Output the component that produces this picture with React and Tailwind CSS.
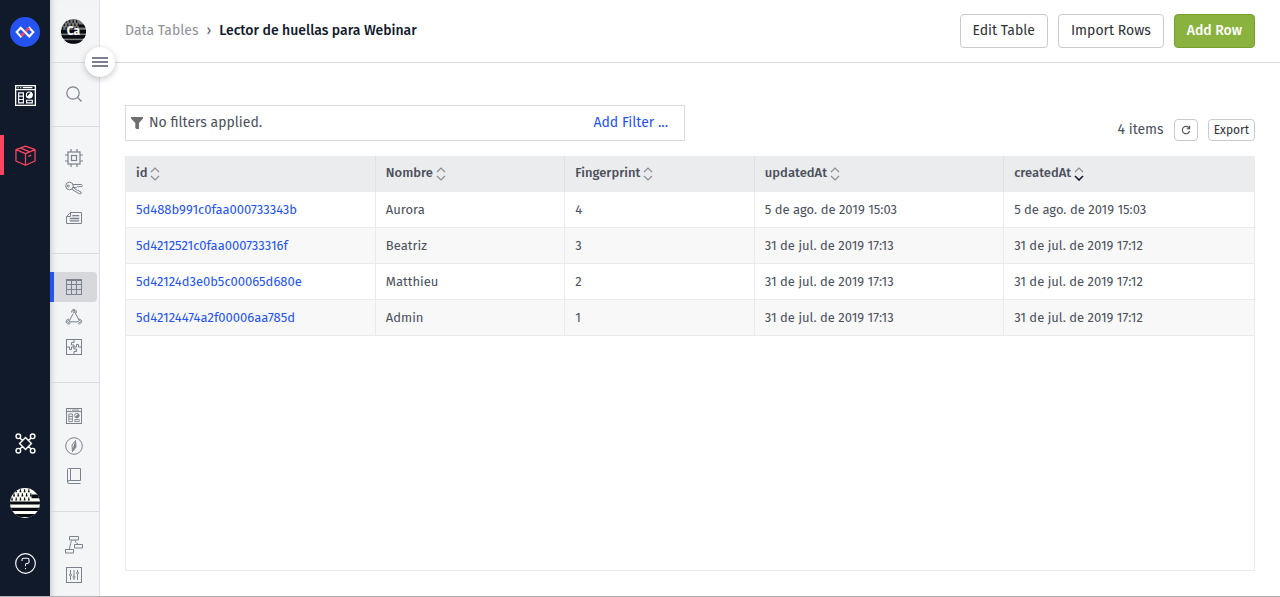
import React, { useId } from "react";

function Icon({ size = 16, box = 16, children, className = "" }) {
  return (
    <svg
      width={size}
      height={size}
      viewBox={`0 0 ${box} ${box}`}
      fill="none"
      stroke="currentColor"
      strokeWidth="1"
      className={`block shrink-0 ${className}`}
      aria-hidden="true"
    >
      {children}
    </svg>
  );
}

const LogoIcon = () => (
  <svg width="30" height="30" viewBox="0 0 30 30" fill="none" className="block" aria-hidden="true">
    <circle cx="15" cy="15" r="15" fill="#2453f0" />
    <g strokeWidth="2.1" strokeLinejoin="miter">
      <path d="M11.600 18.600 10.700 19.500 6.700 15l4-4.200 8.600 8.700 4-4.500-4-4.200-.9.900" stroke="#fff" />
      <path d="m11.200 19 2.900-3.100M15.900 14.100l3.200-3.200" stroke="#ff4558" strokeWidth="2.6" />
    </g>
  </svg>
);

function Flag({ size, dark = false }) {
  const id = useId();
  const spots = [];
  for (let r = 0; r < 3; r++)
    for (let c = 0; c < 5; c++) spots.push([2 + c * 4.2 + (r % 2) * 2, 1.2 + r * 4.1]);
  const light = dark ? "#777" : "#fbfcf6";
  return (
    <svg width={size} height={size} viewBox="0 0 30 30" className="block" aria-hidden="true">
      <clipPath id={id}>
        <circle cx="15" cy="15" r="15" />
      </clipPath>
      <g clipPath={`url(#${id})`}>
        <rect width="30" height="30" fill={light} />
        <path d="M21.500 6.500h9v3.800h-9zM0 13.500h30v3H0zM0 19.800h30v3.200H0zM0 26h30v3H0z" fill="#080b10" />
        {spots.map(([x, y], i) => (
          <path key={i} d={`M${x} ${y}v2.600m-.9 0h1.800`} stroke="#080b10" strokeWidth="1.1" />
        ))}
        {dark && <path d="M0 13h30v4.500H0zM0 19.500h30v4H0zM0 25.500h30v4H0z" fill="#080b10" />}
      </g>
    </svg>
  );
}

const DashboardIcon = ({ size }) => (
  <Icon size={size} box={20}>
    <rect x=".6" y=".6" width="18.800" height="18.800" strokeWidth="1.3" />
    <path d="M.6 4.500h18.800M2.500 2.600h1M5 2.600h1M7.500 2.600h9" strokeWidth="1.2" />
    <path d="M3.500 7.500h4.500v9.500H3.500zM3.500 10.600H8M3.500 13.800H8M11 14.500h5.500v2.500H11z" strokeWidth="1.1" />
    <circle cx="13.600" cy="9.500" r="2.800" strokeWidth="1.1" />
    <path d="m13.600 9.500 2-2a2.800 2.800 0 0 1-3.800 4z" fill="currentColor" />
  </Icon>
);

const BoxIcon = () => (
  <Icon size={21} box={22}>
    <path
      d="M11 1.200 21 4.800v11.900L11 21.200 1 16.700V4.800zM1 4.800 11 9l10-4.200M11 9v12.200M6 3.300 15.500 7.200M13.800 12l3.200-1.400"
      strokeWidth="1.3"
      strokeLinejoin="round"
    />
  </Icon>
);

const NodesIcon = () => (
  <Icon size={21} box={22}>
    <g strokeWidth="1.5">
      <path d="M11 4.800 17.200 11 11 17.200 4.800 11zM5.200 5.200 8 8M16.800 5.200 14 8M5.200 16.800 8 14M16.800 16.800 14 14" />
      <circle cx="3.500" cy="3.500" r="2.400" />
      <circle cx="18.500" cy="3.500" r="2.400" />
      <circle cx="3.500" cy="18.500" r="2.400" />
      <circle cx="18.500" cy="18.500" r="2.400" />
    </g>
  </Icon>
);

const HelpIcon = () => (
  <Icon size={21} box={22}>
    <circle cx="11" cy="11" r="10.300" strokeWidth="1.2" />
    <path d="M7.300 8.300V7.200q0-1.700 1.700-1.700h4q1.700 0 1.700 1.700v2q0 1.700-1.700 1.700h-.7q-1.300 0-1.300 1.300v1.600M11 15.700v1.300" strokeWidth="1.1" />
  </Icon>
);

const SearchIcon = () => (
  <Icon>
    <circle cx="7" cy="7" r="6.200" strokeWidth="1.2" />
    <path d="m11.500 11.500 4 4" strokeWidth="1.2" />
  </Icon>
);

const ChipIcon = () => (
  <Icon size={18} box={18}>
    <rect x="3" y="3" width="12" height="12" strokeWidth="1.200" />
    <rect x="6.500" y="6.500" width="5" height="5" strokeWidth="1.200" />
    <path d="M6 0v3M12 0v3M6 15v3M12 15v3M0 6h3M0 12h3M15 6h3M15 12h3" strokeWidth="1.200" />
  </Icon>
);

const KeysIcon = () => (
  <Icon size={18} box={18}>
    <circle cx="4.500" cy="7" r="3.800" />
    <circle cx="3.300" cy="7" r="1" />
    <path d="M8 5.500h8.500l1 1.200-1.200 1.300-1.200-.8-1.200.9-1.200-.8-1.200 1.200H8M6.500 10.200l7.800 4.600 1.700-.1.200-1.700-1.800-.3-.6-1.200-1.600-.1L8.500 8.500" />
  </Icon>
);

const FilesIcon = () => (
  <Icon>
    <path d="M4.500 2.500h11v11H.5v-7z" />
    <path d="M4.500 2.500v4h-4M6.500 5.500h6.500M4 8.500h9M4 11h9" />
    <path d="M6 5h7.500v6.500h-10v-4H6z" fill="currentColor" fillOpacity=".3" stroke="none" />
  </Icon>
);

const TableIcon = () => (
  <Icon>
    <rect x=".5" y=".5" width="15" height="15" />
    <path d="M.5 1.500h15M.5 5.500h15M.5 10.500h15M5.500 1v15M10.500 1v15" />
  </Icon>
);

const WebhookIcon = () => (
  <Icon size={18} box={18}>
    <path d="M6.500 4.500a2.500 2.500 0 1 1 4.800.4M8.300 5.500 4.500 12.500M9.500 3.500l4.500 8.500M4.500 13.800h8.500M4 11.200a2.400 2.400 0 1 0 1.600 3.600M13 11.500a2.400 2.400 0 1 1 .2 4.200" />
    <circle cx="9" cy="3.500" r="1" />
    <circle cx="3.500" cy="13.500" r="1" />
    <circle cx="14.500" cy="13.500" r="1" />
  </Icon>
);

const PuzzleIcon = () => (
  <Icon>
    <rect x=".5" y=".5" width="15" height="15" />
    <path d="M8 .5v3H5.500v2.500H8V8H5.500v2.500h-2V8h-3M8 15.500v-3h2.500V10H8V8h2.500V5.500h2V8h3" />
  </Icon>
);

const CompassIcon = () => (
  <Icon size={18} box={18}>
    <circle cx="9" cy="9" r="8.300" />
    <path d="m10.500 3.500.5 6.500-3.500 4.500L7 8z" />
    <path d="m10.500 3.500-2 5.500-1 5.500L11 10z" fill="currentColor" stroke="none" />
  </Icon>
);

const BookIcon = () => (
  <Icon>
    <path d="M4.500.5h10v12h-10zM4.500.5h-2a1 1 0 0 0-1 1V14a1.500 1.500 0 0 0 1.500 1.500h11.500M1.500 14A1.500 1.500 0 0 1 3 12.500h1.500" />
  </Icon>
);

const FlowIcon = () => (
  <Icon size={18} box={18}>
    <path d="M4.500.5h9v3.500h-9zM9.500 8.500h8V12h-8zM.5 13.500h8V17h-8zM7 4C6 6 5 8.500 4.500 13.500M10 4c.5 2 1.500 3.500 3.500 4.500" />
  </Icon>
);

const SlidersIcon = () => (
  <Icon>
    <rect x=".5" y=".5" width="15" height="15" />
    <path d="M4.500 3v4M4.500 9v4M8 3v6M8 11v2M11.500 3v2M11.500 7v6" />
    <circle cx="4.500" cy="8" r="1" />
    <circle cx="8" cy="10" r="1" />
    <circle cx="11.500" cy="6" r="1" />
  </Icon>
);

const SortIcon = ({ active }) => (
  <svg width="10" height="14" viewBox="0 0 10 14" fill="none" strokeWidth="1.2" className="mt-0.5 block" aria-hidden="true">
    <path d="m1 5 4-4 4 4" stroke="#8b8e95" />
    <path d="m1 9 4 4 4-4" stroke={active ? "#111827" : "#8b8e95"} strokeWidth={active ? 1.6 : 1.2} />
  </svg>
);

const sections = [
  { pad: "pt-4 pb-5 border-b", items: [["Devices", ChipIcon], ["Access Keys", KeysIcon], ["Files", FilesIcon]] },
  { pad: "pt-[18px] pb-5 border-b", items: [["Data Tables", TableIcon], ["Webhooks", WebhookIcon], ["Integrations", PuzzleIcon]] },
  { pad: "pt-[18px] pb-5 border-b", items: [["Dashboards", () => <DashboardIcon size={16} />], ["Experience", CompassIcon], ["Notebooks", BookIcon]] },
  { pad: "pt-[18px]", items: [["Workflows", FlowIcon], ["Settings", SlidersIcon]] },
];

const columns = [
  ["id", "w-[22.15%]"],
  ["Nombre", "w-[16.8%]"],
  ["Fingerprint", "w-[16.8%]"],
  ["updatedAt", "w-[22.1%]"],
  ["createdAt", "w-[22.15%]"],
];

const rows = [
  ["5d488b991c0faa000733343b", "Aurora", "4", "5 de ago. de 2019 15:03", "5 de ago. de 2019 15:03"],
  ["5d4212521c0faa000733316f", "Beatriz", "3", "31 de jul. de 2019 17:13", "31 de jul. de 2019 17:12"],
  ["5d42124d3e0b5c00065d680e", "Matthieu", "2", "31 de jul. de 2019 17:13", "31 de jul. de 2019 17:12"],
  ["5d42124474a2f00006aa785d", "Admin", "1", "31 de jul. de 2019 17:13", "31 de jul. de 2019 17:12"],
];

const railLink = "flex h-10 w-full items-center justify-center border-l-4 border-r-4 border-r-transparent";

export default function App() {
  return (
    <div className="flex min-h-screen border-b border-[#b0b0b0] bg-white font-['Fira_Sans','Noto_Sans',sans-serif] text-sm leading-5 text-[#4a505c]">
      <nav aria-label="Main" className="flex w-[50px] shrink-0 flex-col justify-between bg-[#111a2b] pt-3 pb-[13px] text-white">
        <div>
          <a href="#home" aria-label="Home" className={`${railLink} border-l-transparent`}>
            <LogoIcon />
          </a>
          <div className="mt-[23px] flex flex-col gap-5">
            <a href="#dashboards" aria-label="Dashboards" className={`${railLink} border-l-transparent`}>
              <DashboardIcon size={21} />
            </a>
            <a href="#application" aria-label="Application" className={`${railLink} border-l-[#ff4560] text-[#ff4560]`}>
              <BoxIcon />
            </a>
          </div>
        </div>
        <div className="flex flex-col gap-5">
          <a href="#edge" aria-label="Edge" className={`${railLink} border-l-transparent`}>
            <NodesIcon />
          </a>
          <a href="#account" aria-label="Account" className={`${railLink} border-l-transparent`}>
            <Flag size={30} />
          </a>
          <a href="#help" aria-label="Help" className={`${railLink} border-l-transparent`}>
            <HelpIcon />
          </a>
        </div>
      </nav>

      <nav
        aria-label="Application"
        className="relative w-[50px] shrink-0 border-r border-[#dfe0e3] bg-[#f4f5f7] text-[#7b828d] shadow-[inset_6px_0_6px_-5px_rgba(0,0,0,0.2)]"
      >
        <div className="flex h-[63px] items-center justify-center border-b border-[#d9dadd] pr-0.5">
          <a href="#app" className="relative block">
            <Flag size={25} dark />
            <span className="absolute inset-0 flex items-center justify-center text-xs font-bold text-white">Ca</span>
          </a>
        </div>
        <button
          type="button"
          aria-label="Toggle menu"
          className="absolute top-[47px] left-[35px] z-10 flex size-[30px] flex-col items-center justify-center gap-0.5 rounded-full bg-white shadow-[0_2px_6px_rgba(0,0,0,0.22)]"
        >
          <span className="h-0.5 w-4 bg-[#7b828d]" />
          <span className="h-0.5 w-4 bg-[#7b828d]" />
          <span className="h-0.5 w-4 bg-[#7b828d]" />
        </button>
        <div className="flex h-16 items-center justify-center border-b border-[#d9dadd] pr-0.5 pb-0.5">
          <button type="button" aria-label="Search">
            <SearchIcon />
          </button>
        </div>
        {sections.map((s, i) => (
          <div key={i} className={`border-[#d9dadd] ${s.pad}`}>
            {s.items.map(([name, Glyph]) => {
              const on = name === "Data Tables";
              return (
                <a
                  key={name}
                  href="#section"
                  aria-label={name}
                  className={`mr-0.5 flex h-[30px] items-center justify-center rounded-r border-l-4 pr-1 ${
                    on ? "border-[#2453f0] bg-[#d7d8dc]" : "border-transparent"
                  }`}
                >
                  <Glyph />
                </a>
              );
            })}
          </div>
        ))}
      </nav>

      <main className="flex min-w-0 flex-1 flex-col">
        <header className="flex h-[63px] items-center justify-between border-b border-[#d9dadd] px-[25px]">
          <div className="flex items-center gap-2">
            <a href="#tables" className="text-[#8e9198]">Data Tables</a>
            <span className="text-[#5f6570]">›</span>
            <h1 className="font-medium text-[#111a2b]">Lector de huellas para Webinar</h1>
          </div>
          <div className="flex gap-2.5 text-[#2f3237]">
            <button type="button" className="h-[34px] rounded border border-[#c9cacc] px-3">Edit Table</button>
            <button type="button" className="h-[34px] rounded border border-[#c9cacc] px-3">Import Rows</button>
            <button type="button" className="h-[34px] rounded border border-[#77a02f] bg-[#8ab23f] px-3 font-medium text-white">
              Add Row
            </button>
          </div>
        </header>

        <div className="flex flex-1 flex-col px-[25px] pt-[42px] pb-[25px]">
          <div className="flex items-end justify-between">
            <div className="flex h-9 w-1/2 max-w-[560px] items-center border border-[#d9dadd] pr-4 pl-[5px]">
              <svg width="12" height="12" viewBox="0 0 12 12" className="mr-1.5" fill="#6f6f6f" aria-hidden="true">
                <path d="M0 0h12v1.500L8 6v6H5.500L4.300 11V6L0 1.500z" />
              </svg>
              <span className="flex-1">No filters applied.</span>
              <button type="button" className="text-[#2453f0]">Add Filter ...</button>
            </div>
            <div className="flex items-center gap-2.5">
              <span>4 items</span>
              <button
                type="button"
                aria-label="Refresh"
                className="flex h-[22px] w-6 items-center justify-center rounded border border-[#c9cacc]"
              >
                <Icon size={10} box={10}>
                  <path d="M8.300 3.300A3.700 3.700 0 1 0 8.600 6M8.600.8v2.900H5.800" strokeWidth="1.1" />
                </Icon>
              </button>
              <button type="button" className="h-[22px] rounded border border-[#c9cacc] px-[5px] text-xs text-[#2f3237]">
                Export
              </button>
            </div>
          </div>

          <div className="mt-[15px] flex-1 border border-t-0 border-[#ebebeb]">
            <table className="w-full table-fixed border-separate border-spacing-0 text-[13px]">
              <thead>
                <tr className="bg-[#ebecee]">
                  {columns.map(([name, width], i) => (
                    <th
                      key={name}
                      scope="col"
                      className={`h-9 p-0 pb-0.5 pl-2.5 text-left font-medium ${width} ${i < 4 ? "border-r border-[#dfe0e3]" : ""}`}
                    >
                      <button type="button" className="flex items-center gap-[3px]">
                        {name}
                        <SortIcon active={i === 4} />
                      </button>
                    </th>
                  ))}
                </tr>
              </thead>
              <tbody>
                {rows.map((row) => (
                  <tr key={row[0]} className="even:bg-[#f8f8f8]">
                    {row.map((cell, i) => (
                      <td key={i} className={`h-9 border-b border-[#ebebeb] p-0 pl-2.5 ${i < 4 ? "border-r" : ""}`}>
                        {i === 0 ? (
                          <a href="#row" className="text-[#2453f0]">{cell}</a>
                        ) : (
                          cell
                        )}
                      </td>
                    ))}
                  </tr>
                ))}
              </tbody>
            </table>
          </div>
        </div>
      </main>
    </div>
  );
}
